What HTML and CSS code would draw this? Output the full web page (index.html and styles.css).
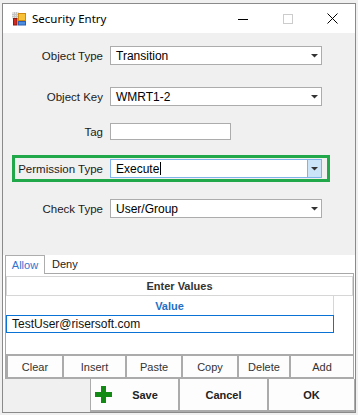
FILE: index.html
```html
<!DOCTYPE html>
<html lang="en">

<head>
    <meta charset="UTF-8">
    <title>Security Entry</title>
    <link rel="stylesheet" href="styles.css">
</head>

<body>
    <div class="window">
        <div class="titlebar">
            <svg class="app-icon" width="14" height="14" viewBox="0 0 14 14">
                <rect x="0" y="0" width="7" height="7" fill="#e2e2e2" />
                <path d="M0 2.5H7M0 4.5H7M2.5 0V7M4.5 0V7" stroke="#c4c4c4" stroke-width="1" />
                <rect x="6.5" y="1.5" width="7" height="7" fill="#f7c237" stroke="#d08a10" />
                <rect x="1.5" y="6.5" width="3.5" height="6.5" fill="#d42a1e" stroke="#8c1810" />
                <rect x="6.5" y="9.5" width="7" height="3.5" fill="#4d8de0" stroke="#2d5fb0" />
            </svg>
            <span class="title">Security Entry</span>
            <div class="controls">
                <div class="ctl">
                    <svg width="10" height="10" viewBox="0 0 10 10"><path d="M0 5.5H10" stroke="#000" /></svg>
                </div>
                <div class="ctl">
                    <svg width="10" height="10" viewBox="0 0 10 10"><rect x="0.5" y="0.5" width="9" height="9" fill="none" stroke="#cccccc" /></svg>
                </div>
                <div class="ctl">
                    <svg width="11" height="11" viewBox="0 0 11 11"><path d="M0.5 0.5L10.5 10.5M10.5 0.5L0.5 10.5" stroke="#000" /></svg>
                </div>
            </div>
        </div>

        <div class="client">
            <div class="form">
                <div class="row">
                    <label>Object Type</label>
                    <div class="combo"><span>Transition</span><span class="drop"><svg width="7" height="4" viewBox="0 0 7 4"><polygon points="0,0 7,0 3.5,3.5" fill="#333" /></svg></span></div>
                </div>
                <div class="row row-key">
                    <label>Object Key</label>
                    <div class="combo"><span>WMRT1-2</span><span class="drop"><svg width="7" height="4" viewBox="0 0 7 4"><polygon points="0,0 7,0 3.5,3.5" fill="#333" /></svg></span></div>
                </div>
                <div class="row row-tag">
                    <label>Tag</label>
                    <div class="textbox"></div>
                </div>
                <div class="row row-perm">
                    <label>Permission Type</label>
                    <div class="combo focus"><span>Execute</span><span class="caret"></span><span class="drop"><svg width="7" height="4" viewBox="0 0 7 4"><polygon points="0,0 7,0 3.5,3.5" fill="#333" /></svg></span></div>
                </div>
                <div class="row row-check">
                    <label>Check Type</label>
                    <div class="combo"><span>User/Group</span><span class="drop"><svg width="7" height="4" viewBox="0 0 7 4"><polygon points="0,0 7,0 3.5,3.5" fill="#333" /></svg></span></div>
                </div>
            </div>

            <div class="tabs">
                <div class="tabstrip">
                    <span class="tab active">Allow</span>
                    <span class="tab">Deny</span>
                </div>
                <div class="tabpage">
                    <div class="grid-title">Enter Values</div>
                    <div class="grid">
                        <div class="col">
                            <div class="col-head">Value</div>
                            <div class="cell-edit">TestUser@risersoft.com</div>
                        </div>
                    </div>
                    <div class="grid-empty"></div>
                    <div class="toolbar">
                        <button>Clear</button>
                        <button>Insert</button>
                        <button>Paste</button>
                        <button>Copy</button>
                        <button>Delete</button>
                        <button>Add</button>
                    </div>
                </div>
            </div>

            <div class="actions">
                <div class="spacer"></div>
                <div class="action-group">
                    <button class="save">
                        <svg width="17" height="17" viewBox="0 0 17 17">
                            <rect x="6" y="0" width="5" height="17" fill="#138a13" />
                            <rect x="0" y="6" width="17" height="5" fill="#138a13" />
                        </svg>
                        <span>Save</span>
                    </button>
                    <button>Cancel</button>
                    <button>OK</button>
                </div>
            </div>
        </div>
    </div>
</body>

</html>
```

FILE: styles.css
```css
* {
    margin: 0;
    padding: 0;
    box-sizing: border-box;
}

body {
    background-color: #f0f0f0;
    font-family: "Liberation Sans", Arial, sans-serif;
}

.window {
    margin: 3px 0 0 2px;
    width: 354px;
    height: 410px;
    border: 1px solid #8a8a8a;
    background-color: #f0f0f0;
    display: flex;
    flex-direction: column;
    overflow: hidden;
}

.titlebar {
    height: 29px;
    background-color: #ffffff;
    display: flex;
    align-items: center;
    padding-left: 9px;
}

.app-icon {
    display: block;
}

.title {
    margin-left: 6px;
    font-family: "Noto Sans", sans-serif;
    font-size: 11.5px;
    color: #000000;
}

.controls {
    margin-left: auto;
    display: flex;
    align-self: stretch;
}

.ctl {
    width: 45px;
    display: flex;
    align-items: center;
    justify-content: center;
}

.ctl svg {
    display: block;
}

.form {
    padding-top: 13px;
}

.row {
    display: grid;
    grid-template-columns: 100px 212px;
    column-gap: 7px;
    align-items: center;
}

.row label {
    text-align: right;
    font-size: 11.5px;
    color: #1b1b1b;
}

.row-key {
    margin-top: 22px;
}

.row-tag {
    margin-top: 17px;
}

.row-perm {
    margin: 15px 0 0 9px;
    width: 318px;
    border: 3px solid #21a84b;
    padding: 1px 5px 1px 0;
    grid-template-columns: 88px 212px;
}

.row-check {
    margin-top: 17px;
}

.combo {
    height: 19px;
    border: 1px solid #acacac;
    background-color: #ffffff;
    display: flex;
    align-items: center;
    padding-left: 5px;
    font-size: 12px;
    color: #000000;
}

.combo .drop {
    margin-left: auto;
    width: 14px;
    height: 100%;
    display: flex;
    align-items: center;
    justify-content: center;
}

.combo .drop svg {
    display: block;
}

.combo.focus {
    border-color: #7eb4ea;
}

.combo.focus .drop {
    background-color: #cce4f7;
    border-left: 1px solid #7eb4ea;
}

.caret {
    width: 1px;
    height: 13px;
    background-color: #000000;
    margin-left: 1px;
}

.textbox {
    width: 121px;
    height: 17px;
    border: 1px solid #acacac;
    background-color: #ffffff;
}

.tabs {
    margin-top: 37px;
    background-color: #ffffff;
}

.tabstrip {
    height: 18px;
    display: flex;
    padding-left: 2px;
}

.tab {
    height: 18px;
    padding: 0 7px;
    font-size: 11px;
    color: #222222;
    display: flex;
    align-items: center;
}

.tab.active {
    width: 40px;
    height: 19px;
    justify-content: center;
    padding: 0;
    border: 1px solid #adadad;
    border-bottom: none;
    background-color: #ffffff;
    color: #2f74d0;
    position: relative;
    z-index: 1;
}

.tabpage {
    margin-left: 2px;
    width: 349px;
    border: 1px solid #a8a8a8;
    border-bottom: none;
    padding-top: 2px;
}

.grid-title {
    height: 20px;
    border: 1px solid #d6d6d6;
    font-size: 11px;
    font-weight: bold;
    color: #333333;
    display: flex;
    align-items: center;
    justify-content: center;
}

.grid {
    display: flex;
}

.col {
    width: 328px;
    border-right: 1px solid #d6d6d6;
}

.col-head {
    height: 19px;
    font-size: 11px;
    font-weight: bold;
    color: #1f6fc4;
    display: flex;
    align-items: center;
    justify-content: center;
}

.cell-edit {
    height: 18px;
    border: 1px solid #0a72d4;
    margin-right: -1px;
    font-size: 12px;
    color: #111111;
    display: flex;
    align-items: center;
    padding-left: 5px;
}

.grid-empty {
    height: 21px;
}

.toolbar {
    height: 25px;
    background-color: #ababab;
    padding: 2px 0 2px 2px;
    display: grid;
    grid-template-columns: 54px 61px 54px 54px 50px 1fr;
    column-gap: 2px;
}

button {
    border: none;
    background-color: #fdfdfd;
    font-family: "Liberation Sans", Arial, sans-serif;
    font-size: 11px;
    color: #333333;
}

.actions {
    height: 33px;
    display: flex;
}

.spacer {
    width: 87px;
    background-color: #f0f0f0;
}

.action-group {
    flex: 1;
    background-color: #ababab;
    padding: 0 1px 2px 1px;
    display: grid;
    grid-template-columns: 87px 87px 1fr;
    column-gap: 2px;
}

.action-group button {
    font-weight: bold;
    color: #222222;
}

.save {
    display: flex;
    align-items: center;
    padding-left: 4px;
}

.save svg {
    display: block;
}

.save span {
    flex: 1;
    text-align: center;
}
```
